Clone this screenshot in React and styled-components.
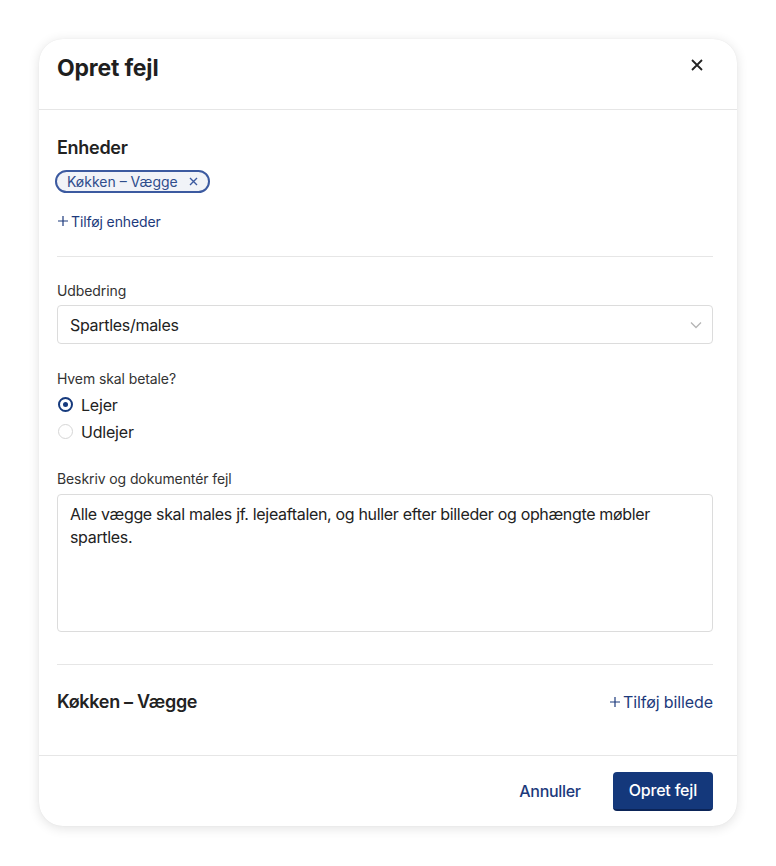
import styled, { createGlobalStyle } from 'styled-components';

const GlobalStyle = createGlobalStyle`
  * { box-sizing: border-box; }
  body {
    margin: 0;
    background: #fff;
    font-family: Inter, "Noto Sans", sans-serif;
    color: #222;
    -webkit-font-smoothing: antialiased;
  }
`;

const Page = styled.div`
  padding: 39px 39px 40px 39px;
`;

const Card = styled.div`
  width: 698px;
  background: #fff;
  border-radius: 24px;
  box-shadow: 0 2px 12px rgba(0, 0, 0, 0.12), 0 0 1px rgba(0, 0, 0, 0.08);
  overflow: hidden;
`;

const Header = styled.div`
  display: flex;
  align-items: flex-start;
  justify-content: space-between;
  height: 71px;
  padding: 15px 34px 0 18px;
  border-bottom: 1px solid #e6e6e6;
`;

const Title = styled.h1`
  margin: 0;
  font-size: 23px;
  line-height: 28px;
  font-weight: 700;
  letter-spacing: -0.2px;
  color: #1f1f1f;
`;

const CloseButton = styled.button`
  border: 0;
  background: none;
  padding: 0;
  margin-top: 5px;
  display: flex;
  cursor: pointer;
  color: #222;
`;

const Body = styled.div`
  padding: 27px 24px 0 18px;
`;

const SectionTitle = styled.h2`
  margin: 0;
  font-size: 18px;
  font-weight: 600;
  color: #222;
  letter-spacing: -0.3px;
`;

const Chips = styled.div`
  display: flex;
  margin: 12px 0 0 -2px;
`;

const Chip = styled.span`
  display: inline-flex;
  align-items: center;
  gap: 11px;
  height: 23px;
  padding: 0 10px 0 10px;
  border: 2px solid #3c5aa0;
  border-radius: 12px;
  background: #f1f3f8;
  color: #2f4d8c;
  font-size: 14px;
`;

const ChipRemove = styled.span`
  display: flex;
  color: #3c5aa0;
`;

const LinkButton = styled.button`
  display: inline-flex;
  align-items: center;
  gap: 2px;
  border: 0;
  background: none;
  padding: 0;
  font-family: inherit;
  font-size: ${(p) => p.size || 14}px;
  color: #1d3a7c;
  cursor: pointer;
  letter-spacing: -0.1px;
`;

const AddRow = styled.div`
  margin-top: 18px;
  padding-bottom: 25px;
  border-bottom: 1px solid #e6e6e6;
`;

const Field = styled.div`
  margin-top: ${(p) => p.top || 0}px;
`;

const Label = styled.div`
  font-size: 14px;
  color: #333;
  margin-bottom: ${(p) => p.gap || 6}px;
  letter-spacing: -0.1px;
`;

const Select = styled.div`
  display: flex;
  align-items: center;
  justify-content: space-between;
  height: 39px;
  padding: 0 10px 0 12px;
  border: 1px solid #dcdcdc;
  border-radius: 4px;
  font-size: 16px;
  color: #222;
  letter-spacing: -0.3px;
`;

const RadioList = styled.div`
  display: flex;
  flex-direction: column;
  gap: 6px;
  margin-top: 7px;
`;

const RadioRow = styled.label`
  display: flex;
  align-items: center;
  gap: 8px;
  font-size: 16px;
  color: #222;
  height: 21px;
  letter-spacing: -0.2px;
`;

const RadioDot = styled.span`
  width: 15px;
  height: 15px;
  margin-left: 1px;
  border-radius: 50%;
  border: ${(p) => (p.checked ? '2px solid #163a7d' : '1px solid #d6d6d6')};
  display: flex;
  align-items: center;
  justify-content: center;
  &::after {
    content: '';
    width: 5px;
    height: 5px;
    border-radius: 50%;
    background: ${(p) => (p.checked ? '#163a7d' : 'transparent')};
  }
`;

const TextArea = styled.div`
  height: 138px;
  padding: 8px 12px;
  border: 1px solid #dcdcdc;
  border-radius: 4px;
  font-size: 16px;
  line-height: 23px;
  color: #222;
  letter-spacing: -0.33px;
`;

const UnitRow = styled.div`
  display: flex;
  align-items: center;
  justify-content: space-between;
  margin-top: 32px;
  padding: 26px 0 43px;
  border-top: 1px solid #e6e6e6;
`;

const Footer = styled.div`
  display: flex;
  justify-content: flex-end;
  align-items: center;
  gap: 32px;
  height: 71px;
  padding: 0 24px 0 18px;
  border-top: 1px solid #e6e6e6;
`;

const GhostButton = styled.button`
  border: 0;
  background: none;
  padding: 0;
  font-family: inherit;
  font-size: 16px;
  color: #1d3a7c;
  cursor: pointer;
  font-weight: 500;
  letter-spacing: -0.3px;
`;

const PrimaryButton = styled.button`
  height: 39px;
  padding: 0 16px;
  border: 0;
  border-bottom: 2px solid #0b2458;
  border-radius: 4px;
  background: #14387b;
  color: #fff;
  font-family: inherit;
  font-size: 16px;
  font-weight: 500;
  letter-spacing: -0.2px;
  cursor: pointer;
`;

const Plus = () => (
  <svg width="12" height="12" viewBox="0 0 12 12" fill="none" stroke="currentColor" strokeWidth="1.2">
    <path d="M6 1v10M1 6h10" />
  </svg>
);

const App = () => (
  <>
    <GlobalStyle />
    <Page>
      <Card>
        <Header>
          <Title>Opret fejl</Title>
          <CloseButton aria-label="Luk">
            <svg width="12" height="12" viewBox="0 0 12 12" stroke="currentColor" strokeWidth="1.8">
              <path d="M1 1l10 10M11 1L1 11" />
            </svg>
          </CloseButton>
        </Header>
        <Body>
          <SectionTitle>Enheder</SectionTitle>
          <Chips>
            <Chip>
              Køkken – Vægge
              <ChipRemove>
                <svg width="9" height="9" viewBox="0 0 9 9" stroke="currentColor" strokeWidth="1.4">
                  <path d="M1 1l7 7M8 1L1 8" />
                </svg>
              </ChipRemove>
            </Chip>
          </Chips>
          <AddRow>
            <LinkButton>
              <Plus />
              Tilføj enheder
            </LinkButton>
          </AddRow>

          <Field top={25}>
            <Label>Udbedring</Label>
            <Select>
              Spartles/males
              <svg width="12" height="8" viewBox="0 0 12 8" fill="none" stroke="#b5b5b5" strokeWidth="1.3">
                <path d="M1 1.5l5 5 5-5" />
              </svg>
            </Select>
          </Field>

          <Field top={26}>
            <Label>Hvem skal betale?</Label>
            <RadioList>
              <RadioRow>
                <RadioDot checked />
                Lejer
              </RadioRow>
              <RadioRow>
                <RadioDot />
                Udlejer
              </RadioRow>
            </RadioList>
          </Field>

          <Field top={28}>
            <Label gap={7}>Beskriv og dokumentér fejl</Label>
            <TextArea>
              Alle vægge skal males jf. lejeaftalen, og huller efter billeder og ophængte møbler spartles.
            </TextArea>
          </Field>

          <UnitRow>
            <SectionTitle>Køkken – Vægge</SectionTitle>
            <LinkButton size={16}>
              <Plus />
              Tilføj billede
            </LinkButton>
          </UnitRow>
        </Body>
        <Footer>
          <GhostButton>Annuller</GhostButton>
          <PrimaryButton>Opret fejl</PrimaryButton>
        </Footer>
      </Card>
    </Page>
  </>
);

export default App;
